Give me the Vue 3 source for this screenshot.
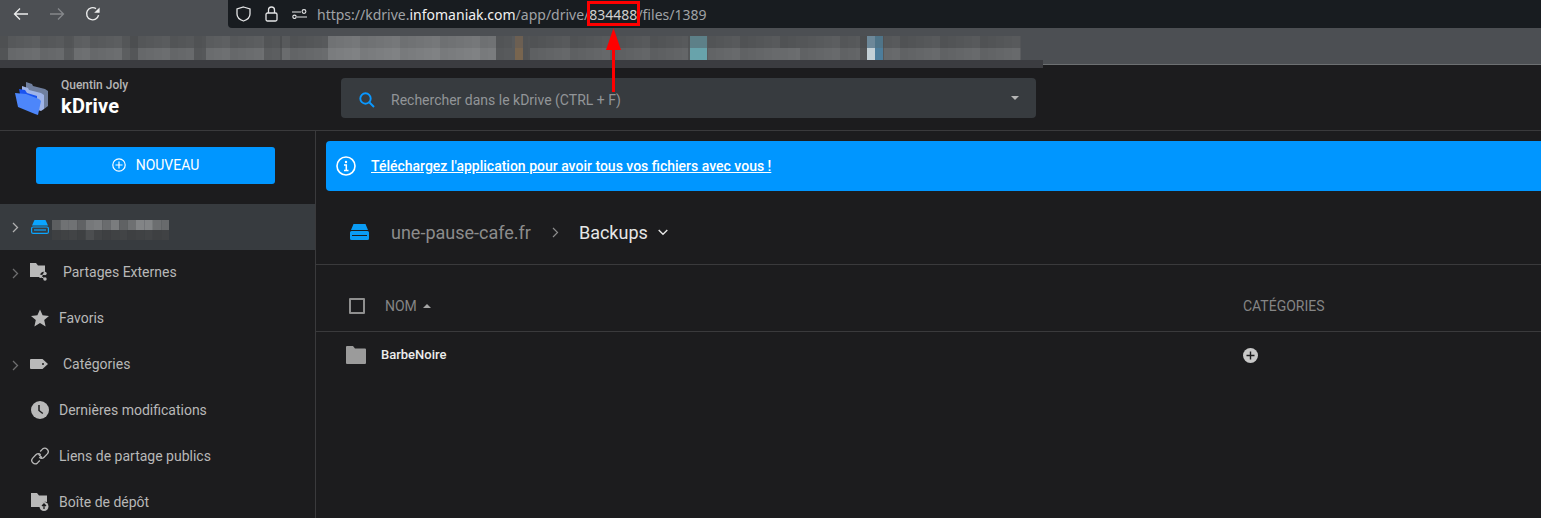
<template>
  <div class="page">
    <!-- browser chrome -->
    <div class="browser">
      <div class="toolbar">
        <div class="nav-btns">
          <svg width="16" height="14" viewBox="0 0 16 14" class="ico-back"><path d="M15 7H1.5M7 1.5 1.5 7 7 12.5" fill="none" stroke="currentColor" stroke-width="1.3"/></svg>
          <svg width="16" height="14" viewBox="0 0 16 14" class="ico-fwd"><path d="M1 7h13.5M9 1.5 14.5 7 9 12.5" fill="none" stroke="currentColor" stroke-width="1.3"/></svg>
          <svg width="16" height="16" viewBox="0 0 16 16" class="ico-reload"><path d="M13.6 9.2A6.1 6.1 0 1 1 11 2.6" fill="none" stroke="currentColor" stroke-width="1.4"/><path d="M14.6 1.4v5.4H9.2z" fill="currentColor"/></svg>
        </div>
        <div class="urlbar">
          <svg width="15" height="16" viewBox="0 0 15 16" class="url-ico"><path d="M7.5 1 14 3v5c0 3.400-2.800 5.800-6.500 7C3.800 13.800 1 11.400 1 8V3z" fill="none" stroke="currentColor" stroke-width="1.3"/></svg>
          <svg width="13" height="16" viewBox="0 0 13 16" class="url-ico lock"><rect x="1" y="7" width="11" height="8" rx="1.500" fill="none" stroke="currentColor" stroke-width="1.300"/><path d="M3.500 7V4a3 3 0 0 1 6 0v3" fill="none" stroke="currentColor" stroke-width="1.300"/></svg>
          <svg width="15" height="10" viewBox="0 0 15 10" class="url-ico perm"><path d="M0 3h9M5 8h10" stroke="currentColor" stroke-width="1.200"/><circle cx="12" cy="2.500" r="1.900" fill="#181c20" stroke="currentColor" stroke-width="1.100"/><circle cx="2.500" cy="7.800" r="1.700" fill="#181c20" stroke="currentColor" stroke-width="1.100"/></svg>
          <span class="url"><span>https://kdrive.</span><b>infomaniak.com</b><span>/app/drive/</span><span class="url-id">834488</span><span>/files/1389</span></span>
        </div>
      </div>
      <div class="bookmarks"></div>
    </div>

    <!-- app header -->
    <header class="app-header">
      <div class="brand">
        <svg width="36" height="36" viewBox="0 0 36 36" class="logo">
          <path d="M12 3l6 2 1 2 12 3 3 2v15l-4 3-18-6z" fill="#6f7f9f"/>
          <path d="M8 7l6 2 1 2 12 3 3 2v14l-3 2-19-6z" fill="#9fb4e8"/>
          <path d="M5 10l6 1 2 3 10 3v12L8 25z" fill="#1a53f0"/>
          <path d="M1 14l11 1 13 5 2 2-3 14-3-1-17-7z" fill="#4d86fa"/>
        </svg>
        <div class="brand-text">
          <div class="user">Quentin Joly</div>
          <div class="product">kDrive</div>
        </div>
      </div>
      <div class="search">
        <svg width="16" height="16" viewBox="0 0 16 16" class="search-ico"><circle cx="6.500" cy="6.500" r="5.200" fill="none" stroke="#0a98ff" stroke-width="1.900"/><path d="M10.500 10.500 15 15" stroke="#0a98ff" stroke-width="2"/></svg>
        <span class="placeholder">Rechercher dans le kDrive (CTRL + F)</span>
        <span class="search-caret"></span>
      </div>
    </header>

    <div class="body">
      <aside class="sidebar">
        <button class="new-btn">
          <svg width="14" height="14" viewBox="0 0 14 14"><circle cx="7" cy="7" r="6.200" fill="none" stroke="#fff" stroke-width="1.200"/><path d="M7 3.500v7M3.500 7h7" stroke="#fff" stroke-width="1.200"/></svg>
          <span>NOUVEAU</span>
        </button>
        <nav class="menu">
          <div class="row selected">
            <svg width="7" height="11" viewBox="0 0 7 11" class="chev bright"><path d="M1 1l4.500 4.500L1 10" fill="none" stroke="currentColor" stroke-width="1.300"/></svg>
            <svg width="18" height="14" viewBox="0 0 18 14" class="row-ico"><path d="M3.500 0h11L17 5.500H1z" fill="#0aa5ff"/><rect x="0.600" y="7" width="16.800" height="6.400" rx="1.500" fill="none" stroke="#0aa5ff" stroke-width="1.200"/><path d="M3 10h12" stroke="#0aa5ff" stroke-width="1.200"/></svg>
            <svg width="117" height="20" viewBox="0 0 117 20" class="blur-name">
              <rect v-for="c in nameCells" :key="c.x + '-' + c.y" :x="c.x" :y="c.y" width="8.500" height="10" :fill="c.fill"/>
            </svg>
          </div>
          <div v-for="item in menu" :key="item.label" class="row" :class="{ nested: item.chevron }">
            <svg v-if="item.chevron" width="7" height="11" viewBox="0 0 7 11" class="chev"><path d="M1 1l4.500 4.500L1 10" fill="none" stroke="currentColor" stroke-width="1.300"/></svg>
            <svg width="18" height="18" viewBox="0 0 18 18" class="row-ico">
              <template v-if="item.icon === 'share'">
                <path d="M0 0h6l2 2.500h7v6.500a4 4 0 0 0-5 5H0z" fill="#b9b9b9"/>
                <circle cx="15" cy="10.500" r="1.700" fill="#b9b9b9"/><circle cx="15" cy="16" r="1.700" fill="#b9b9b9"/><circle cx="10.500" cy="13.300" r="1.700" fill="#b9b9b9"/>
                <path d="M15 10.500l-4.500 2.800L15 16" fill="none" stroke="#b9b9b9" stroke-width="1"/>
              </template>
              <path v-else-if="item.icon === 'star'" d="M9 .5l2.600 5.800 6.400.6-4.800 4.200 1.400 6.300L9 14.100l-5.600 3.300 1.400-6.300L0 6.900l6.400-.6z" fill="#b9b9b9"/>
              <path v-else-if="item.icon === 'tag'" d="M1 4h11.500L18 9l-5.500 5H1a1 1 0 0 1-1-1V5a1 1 0 0 1 1-1zm12 4a1 1 0 1 0 0 2 1 1 0 0 0 0-2z" fill="#b9b9b9" fill-rule="evenodd"/>
              <template v-else-if="item.icon === 'clock'">
                <circle cx="9" cy="9" r="9" fill="#b9b9b9"/><path d="M8 4v5.500l3.800 3" fill="none" stroke="#1c1c1e" stroke-width="1.500"/>
              </template>
              <g v-else-if="item.icon === 'link'" fill="none" stroke="#b9b9b9" stroke-width="1.300">
                <path d="M7.500 7.200 10.800 10.500M9.200 4.500l2.300-2.400a3.400 3.400 0 0 1 4.800 4.800l-3.200 3.300a3.400 3.400 0 0 1-4.800 0"/>
                <path d="M8.800 13.500l-2.300 2.400a3.400 3.400 0 0 1-4.800-4.800l3.200-3.300a3.400 3.400 0 0 1 4.800 0"/>
              </g>
              <template v-else-if="item.icon === 'dropbox'">
                <path d="M0 0h6l2 2.500h8v6.500a5 5 0 0 0-6.500 5H0z" fill="#b9b9b9"/>
                <circle cx="13" cy="13.500" r="4.500" fill="#b9b9b9"/><path d="M13 16v-4.500M11 13l2-2 2 2" fill="none" stroke="#1c1c1e" stroke-width="1.300"/>
              </template>
            </svg>
            <span class="row-label">{{ item.label }}</span>
          </div>
        </nav>
      </aside>

      <main class="content">
        <div class="banner">
          <svg width="20" height="20" viewBox="0 0 20 20"><circle cx="10" cy="10" r="9" fill="none" stroke="#fff" stroke-width="1.600"/><circle cx="10" cy="6" r="1.200" fill="#fff"/><path d="M8 9h2.300v5M8 14.500h4.500" fill="none" stroke="#fff" stroke-width="1.500"/></svg>
          <a class="banner-link">Téléchargez l'application pour avoir tous vos fichiers avec vous !</a>
        </div>
        <div class="crumbs">
          <svg width="19" height="16" viewBox="0 0 19 16"><path d="M3.500 0h12L18 6H1z" fill="#0a9cf5"/><path d="M1.500 7h16A1.500 1.500 0 0 1 19 8.500v6a1.500 1.500 0 0 1-1.500 1.500h-16A1.500 1.500 0 0 1 0 14.500v-6A1.500 1.500 0 0 1 1.500 7z" fill="#0a9cf5"/><path d="M2 11.500h15" stroke="#1c1c1e" stroke-width="1"/></svg>
          <span class="crumb-root">une-pause-cafe.fr</span>
          <svg width="7" height="11" viewBox="0 0 7 11" class="crumb-sep"><path d="M1 1l4.500 4.500L1 10" fill="none" stroke="currentColor" stroke-width="1.200"/></svg>
          <span class="crumb-cur">Backups</span>
          <svg width="10" height="7" viewBox="0 0 10 7" class="crumb-down"><path d="M.7 1l4.300 4.300L9.300 1" fill="none" stroke="currentColor" stroke-width="1.400"/></svg>
        </div>
        <div class="table-head">
          <div class="col-name">
            <span class="check"></span>
            <span>NOM</span>
            <span class="sort-caret"></span>
          </div>
          <div>CATÉGORIES</div>
        </div>
        <div class="table-row">
          <div class="col-file">
            <svg width="20" height="18" viewBox="0 0 20 18"><path d="M0 1a1 1 0 0 1 1-1h6l2 2.500h10a1 1 0 0 1 1 1V17a1 1 0 0 1-1 1H1a1 1 0 0 1-1-1z" fill="#9b9b9b"/></svg>
            <span class="file-name">BarbeNoire</span>
          </div>
          <svg width="15" height="15" viewBox="0 0 15 15" class="add-cat"><circle cx="7.500" cy="7.500" r="7.500" fill="#c8c8c8"/><path d="M7.500 3.500v8M3.500 7.500h8" stroke="#1c1c1e" stroke-width="1.400"/></svg>
        </div>
      </main>
    </div>

    <!-- pixelated bookmarks, painted over the screenshot -->
    <svg class="mosaic" width="1043" height="32" viewBox="0 0 1043 32">
      <rect x="0" y="24" width="1043" height="8" fill="#3b3c40"/>
      <rect v-for="c in cells" :key="c.x + '-' + c.y" :x="c.x" :y="c.y" width="8.500" height="12" :fill="c.fill"/>
      <rect v-for="a in accents" :key="a.x + '-' + a.y" :x="a.x" :y="a.y" :width="a.w" height="12" :fill="a.fill"/>
    </svg>

    <!-- red annotation -->
    <div class="mark-box"></div>
    <svg class="mark-arrow" width="15" height="66" viewBox="0 0 15 66">
      <path d="M7.500 0 15 22H0z" fill="#f00"/>
      <path d="M7.500 20v44" stroke="#f00" stroke-width="3"/>
    </svg>
  </div>
</template>

<script setup>
const menu = [
  { label: 'Partages Externes', icon: 'share', chevron: true },
  { label: 'Favoris', icon: 'star' },
  { label: 'Catégories', icon: 'tag', chevron: true },
  { label: 'Dernières modifications', icon: 'clock' },
  { label: 'Liens de partage publics', icon: 'link' },
  { label: 'Boîte de dépôt', icon: 'dropbox' }
];

// [from, to, top gray, bottom gray]
const segments = [
  [0, 8, 82, 86], [8, 64, 88, 104], [64, 74, 80, 86], [74, 122, 90, 106], [122, 138, 80, 88],
  [138, 194, 86, 104], [194, 206, 78, 82], [206, 264, 90, 106], [264, 282, 80, 88],
  [282, 328, 84, 102], [328, 496, 114, 124], [496, 512, 82, 86], [512, 530, 84, 84],
  [530, 610, 84, 98], [610, 688, 84, 96], [688, 708, 82, 86], [708, 780, 84, 100],
  [780, 800, 84, 108], [800, 860, 88, 100], [860, 884, 80, 86], [884, 1016, 84, 100]
];

function cellGray(x, base) {
  return base + ((x * 7) % 5) * 2 - 4;
}

function gray(v) {
  return `rgb(${v},${v + 2},${v + 4})`;
}

const cells = [];
for (const [from, to, top, bot] of segments) {
  for (let x = from; x < to; x += 8) {
    cells.push({ x, y: 0, fill: gray(cellGray(x, top)) });
    cells.push({ x, y: 12, fill: gray(cellGray(x, bot)) });
  }
}

// the few coloured favicons that stay visible through the blur
const accents = [
  { x: 515, y: 0, w: 8, fill: '#6c5f52' }, { x: 515, y: 12, w: 8, fill: '#78654f' },
  { x: 690, y: 0, w: 17, fill: '#5d8088' }, { x: 690, y: 12, w: 17, fill: '#68a3ab' },
  { x: 867, y: 0, w: 8, fill: '#6d8899' }, { x: 867, y: 12, w: 8, fill: '#c3d0d6' },
  { x: 875, y: 0, w: 8, fill: '#4f7488' }, { x: 875, y: 12, w: 8, fill: '#4d7d9b' }
];

const nameTop = [92, 112, 112, 96, 118, 122, 106, 122, 96, 110, 130, 130, 108, 104];
const nameCells = [];
nameTop.forEach((v, i) => {
  nameCells.push({ x: i * 8.4, y: 0, fill: gray(v) });
  nameCells.push({ x: i * 8.4, y: 10, fill: gray(i === 4 ? 76 : 62 + (i % 3) * 2) });
});
</script>

<style scoped>
.page {
  position: relative;
  width: 1541px;
  height: 518px;
  overflow: hidden;
  background: #1c1c1e;
  font-family: Roboto, "Liberation Sans", sans-serif;
  color: #b8b8b8;
}

.browser { background: #4c4f53; border-bottom: 1px solid #6d7072; }
.toolbar { height: 28px; display: flex; }
.nav-btns { width: 228px; display: flex; align-items: center; padding-left: 13px; box-sizing: border-box; color: #eceded; }
.ico-fwd { margin-left: 20px; color: #85888b; }
.ico-reload { margin-left: 20px; }
.urlbar {
  flex: 1;
  background: #181c20;
  border-radius: 0 0 0 4px;
  display: flex;
  align-items: center;
  padding-left: 8px;
  color: #e4e5e6;
}
.lock { margin-left: 14px; }
.perm { margin-left: 14px; }
.url {
  margin-left: 10px;
  font-family: "Noto Sans", sans-serif;
  font-size: 14px;
  color: #a0a3a6;
  white-space: nowrap;
}
.url b { font-weight: 400; color: #f1f1f1; }
.url-id { color: #d0d0d0; }
.bookmarks { height: 36px; }

.app-header {
  height: 65px;
  display: flex;
  align-items: center;
  border-bottom: 1px solid #3a3a3c;
}
.brand { width: 341px; display: flex; align-items: center; padding-left: 14px; box-sizing: border-box; }
.logo { margin-top: -1px; }
.brand-text { margin-left: 11px; padding-top: 2px; }
.user { font-size: 12px; font-weight: 500; color: #b5b5b5; line-height: 15px; }
.product { font-size: 20px; font-weight: 700; color: #fff; line-height: 26px; letter-spacing: 0.2px; }
.search {
  width: 695px;
  height: 40px;
  background: #373b3f;
  border-radius: 4px;
  display: flex;
  align-items: center;
  padding: 4px 18px 0;
  box-sizing: border-box;
}
.placeholder { margin-left: 16px; font-size: 14px; color: #929598; flex: 1; }
.search-caret {
  width: 0; height: 0;
  border-left: 4px solid transparent;
  border-right: 4px solid transparent;
  border-top: 4px solid #b5b5b5;
  margin-right: -1px;
  margin-top: -4px;
}

.body { display: flex; height: 388px; }
.sidebar { width: 315px; border-right: 1px solid #3a3a3c; padding-top: 16px; flex-shrink: 0; }
.new-btn {
  display: flex;
  align-items: center;
  justify-content: center;
  gap: 10px;
  width: 239px;
  height: 37px;
  margin-left: 36px;
  border: 0;
  border-radius: 3px;
  background: #0096ff;
  color: #fff;
  font-family: inherit;
  font-size: 14px;
  padding: 0 0 2px;
}
.menu { margin-top: 20px; }
.row {
  position: relative;
  height: 46px;
  display: flex;
  align-items: center;
  padding: 0 0 2px 31px;
  font-size: 14px;
  box-sizing: border-box;
}
.row.selected { background: #373b3f; padding-bottom: 0; }
.chev { position: absolute; left: 12px; top: 18px; color: #6d6d6f; }
.chev.bright { color: #b0b0b0; }
.row-ico { flex-shrink: 0; }
.row-label { margin-left: 10px; }
.row.nested { padding-left: 30px; }
.row.nested .row-label { margin-left: 15px; }
.blur-name { margin-left: 3px; margin-top: 6px; }

.content { flex: 1; min-width: 0; }
.banner {
  height: 50px;
  margin: 10px 0 0 10px;
  background: #0096ff;
  border-radius: 4px 0 0 4px;
  display: flex;
  align-items: center;
  padding-left: 10px;
}
.banner-link {
  margin-left: 15px;
  font-size: 14px;
  font-weight: 500;
  color: #fff;
  text-decoration: underline;
}
.crumbs {
  height: 74px;
  display: flex;
  align-items: center;
  padding: 9px 0 0 34px;
  border-bottom: 1px solid #3a3a3c;
  font-size: 18px;
  box-sizing: border-box;
}
.crumb-root { margin-left: 22px; color: #8c8c8c; }
.crumb-sep { margin-left: 21px; color: #8c8c8c; }
.crumb-cur { margin-left: 20px; color: #e6e6e6; }
.crumb-down { margin-left: 10px; color: #e6e6e6; }

.table-head {
  height: 67px;
  display: grid;
  grid-template-columns: 927px 1fr;
  align-items: center;
  padding-top: 16px;
  border-bottom: 1px solid #3a3a3c;
  font-size: 14px;
  color: #858585;
  box-sizing: border-box;
}
.col-name { display: flex; align-items: center; padding-left: 33px; }
.check { width: 16px; height: 16px; border: 2px solid #8f8f8f; border-radius: 1px; box-sizing: border-box; margin-right: 20px; }
.sort-caret {
  width: 0; height: 0;
  margin-left: 6px;
  border-left: 4px solid transparent;
  border-right: 4px solid transparent;
  border-bottom: 4px solid #a5a5a5;
}
.table-row {
  height: 45px;
  display: grid;
  grid-template-columns: 927px 1fr;
  align-items: center;
}
.col-file { display: flex; align-items: center; padding-left: 30px; }
.file-name { margin-left: 15px; font-size: 13px; font-weight: 500; color: #ececec; }
.add-cat { margin-top: 2px; }

.mosaic { position: absolute; left: 0; top: 36px; }
.mark-box {
  position: absolute;
  left: 587px;
  top: 1px;
  width: 53px;
  height: 25px;
  border: 3px solid #f00;
  box-sizing: border-box;
}
.mark-arrow { position: absolute; left: 606px; top: 28px; }
</style>

<style>
html, body { margin: 0; background: #1c1c1e; }
</style>
